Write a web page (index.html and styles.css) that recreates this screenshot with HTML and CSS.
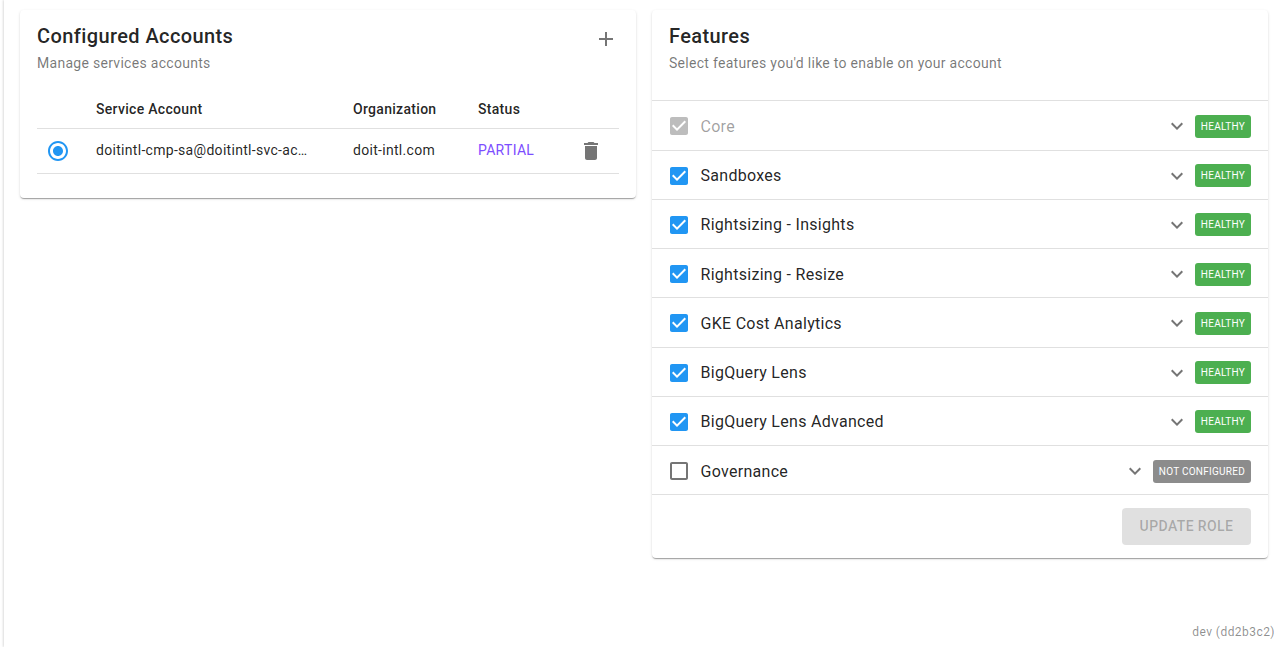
FILE: index.html
```html
<html>
	<head>
		<title>Accounts and Features</title>
		<link rel="stylesheet" href="styles.css">
	</head>

	<body>
		<div class="page">
			<div class="columns">
				<div class="card accounts">
					<div class="card-head">
						<div>
							<div class="title">Configured Accounts</div>
							<div class="subtitle">Manage services accounts</div>
						</div>
						<svg class="add" viewBox="0 0 24 24"><path d="M19 13h-6v6h-2v-6H5v-2h6V5h2v6h6v2z"/></svg>
					</div>
					<div class="table">
						<div class="table-row table-header">
							<span></span>
							<span>Service Account</span>
							<span>Organization</span>
							<span>Status</span>
							<span></span>
						</div>
						<div class="table-row">
							<svg class="radio" viewBox="0 0 24 24"><path d="M12 7c-2.76 0-5 2.24-5 5s2.24 5 5 5 5-2.24 5-5-2.24-5-5-5zm0-5C6.48 2 2 6.48 2 12s4.48 10 10 10 10-4.48 10-10S17.52 2 12 2zm0 18c-4.42 0-8-3.58-8-8s3.58-8 8-8 8 3.58 8 8-3.58 8-8 8z"/></svg>
							<span>doitintl-cmp-sa@doitintl-svc-ac…</span>
							<span>doit-intl.com</span>
							<span class="partial">PARTIAL</span>
							<svg class="trash" viewBox="0 0 24 24"><path d="M6 19c0 1.1.9 2 2 2h8c1.1 0 2-.9 2-2V7H6v12zM19 4h-3.5l-1-1h-5l-1 1H5v2h14V4z"/></svg>
						</div>
					</div>
				</div>

				<div class="card features">
					<div class="card-head features-head">
						<div>
							<div class="title">Features</div>
							<div class="subtitle">Select features you'd like to enable on your account</div>
						</div>
					</div>

					<div class="feature disabled">
						<svg class="check" viewBox="0 0 24 24"><path d="M19 3H5c-1.11 0-2 .9-2 2v14c0 1.1.89 2 2 2h14c1.11 0 2-.9 2-2V5c0-1.1-.89-2-2-2zm-9 14l-5-5 1.41-1.41L10 14.17l7.59-7.59L19 8l-9 9z"/></svg>
						<span class="name">Core</span>
						<svg class="chevron" viewBox="0 0 24 24"><path d="M16.59 8.59L12 13.17 7.41 8.59 6 10l6 6 6-6z"/></svg>
						<span class="badge">HEALTHY</span>
					</div>
					<div class="feature">
						<svg class="check" viewBox="0 0 24 24"><path d="M19 3H5c-1.11 0-2 .9-2 2v14c0 1.1.89 2 2 2h14c1.11 0 2-.9 2-2V5c0-1.1-.89-2-2-2zm-9 14l-5-5 1.41-1.41L10 14.17l7.59-7.59L19 8l-9 9z"/></svg>
						<span class="name">Sandboxes</span>
						<svg class="chevron" viewBox="0 0 24 24"><path d="M16.59 8.59L12 13.17 7.41 8.59 6 10l6 6 6-6z"/></svg>
						<span class="badge">HEALTHY</span>
					</div>
					<div class="feature">
						<svg class="check" viewBox="0 0 24 24"><path d="M19 3H5c-1.11 0-2 .9-2 2v14c0 1.1.89 2 2 2h14c1.11 0 2-.9 2-2V5c0-1.1-.89-2-2-2zm-9 14l-5-5 1.41-1.41L10 14.17l7.59-7.59L19 8l-9 9z"/></svg>
						<span class="name">Rightsizing - Insights</span>
						<svg class="chevron" viewBox="0 0 24 24"><path d="M16.59 8.59L12 13.17 7.41 8.59 6 10l6 6 6-6z"/></svg>
						<span class="badge">HEALTHY</span>
					</div>
					<div class="feature">
						<svg class="check" viewBox="0 0 24 24"><path d="M19 3H5c-1.11 0-2 .9-2 2v14c0 1.1.89 2 2 2h14c1.11 0 2-.9 2-2V5c0-1.1-.89-2-2-2zm-9 14l-5-5 1.41-1.41L10 14.17l7.59-7.59L19 8l-9 9z"/></svg>
						<span class="name">Rightsizing - Resize</span>
						<svg class="chevron" viewBox="0 0 24 24"><path d="M16.59 8.59L12 13.17 7.41 8.59 6 10l6 6 6-6z"/></svg>
						<span class="badge">HEALTHY</span>
					</div>
					<div class="feature">
						<svg class="check" viewBox="0 0 24 24"><path d="M19 3H5c-1.11 0-2 .9-2 2v14c0 1.1.89 2 2 2h14c1.11 0 2-.9 2-2V5c0-1.1-.89-2-2-2zm-9 14l-5-5 1.41-1.41L10 14.17l7.59-7.59L19 8l-9 9z"/></svg>
						<span class="name">GKE Cost Analytics</span>
						<svg class="chevron" viewBox="0 0 24 24"><path d="M16.59 8.59L12 13.17 7.41 8.59 6 10l6 6 6-6z"/></svg>
						<span class="badge">HEALTHY</span>
					</div>
					<div class="feature">
						<svg class="check" viewBox="0 0 24 24"><path d="M19 3H5c-1.11 0-2 .9-2 2v14c0 1.1.89 2 2 2h14c1.11 0 2-.9 2-2V5c0-1.1-.89-2-2-2zm-9 14l-5-5 1.41-1.41L10 14.17l7.59-7.59L19 8l-9 9z"/></svg>
						<span class="name">BigQuery Lens</span>
						<svg class="chevron" viewBox="0 0 24 24"><path d="M16.59 8.59L12 13.17 7.41 8.59 6 10l6 6 6-6z"/></svg>
						<span class="badge">HEALTHY</span>
					</div>
					<div class="feature">
						<svg class="check" viewBox="0 0 24 24"><path d="M19 3H5c-1.11 0-2 .9-2 2v14c0 1.1.89 2 2 2h14c1.11 0 2-.9 2-2V5c0-1.1-.89-2-2-2zm-9 14l-5-5 1.41-1.41L10 14.17l7.59-7.59L19 8l-9 9z"/></svg>
						<span class="name">BigQuery Lens Advanced</span>
						<svg class="chevron" viewBox="0 0 24 24"><path d="M16.59 8.59L12 13.17 7.41 8.59 6 10l6 6 6-6z"/></svg>
						<span class="badge">HEALTHY</span>
					</div>
					<div class="feature off">
						<svg class="check" viewBox="0 0 24 24"><path d="M19 5v14H5V5h14m0-2H5c-1.1 0-2 .9-2 2v14c0 1.1.9 2 2 2h14c1.1 0 2-.9 2-2V5c0-1.1-.9-2-2-2z"/></svg>
						<span class="name">Governance</span>
						<svg class="chevron" viewBox="0 0 24 24"><path d="M16.59 8.59L12 13.17 7.41 8.59 6 10l6 6 6-6z"/></svg>
						<span class="badge grey">NOT CONFIGURED</span>
					</div>

					<div class="card-actions">
						<div class="button">UPDATE ROLE</div>
					</div>
				</div>
			</div>

			<div class="version">dev (dd2b3c2)</div>
		</div>
	</body>
</html>
```

FILE: styles.css
```css
body{
	margin:0;
	background:#fff;
	font-family:Roboto, "Liberation Sans", sans-serif;
	color:rgba(0,0,0,0.87);
}

.page{
	height:647px;
	box-sizing:border-box;
	margin-left:4px;
	box-shadow:-1px 0 2px rgba(0,0,0,0.14);
	clip-path:inset(0 0 0 -4px);
	padding:10px 12px 7px 16px;
	display:flex;
	flex-direction:column;
	background:#fff;
}

.columns{
	display:flex;
	align-items:flex-start;
	gap:16px;
	flex:1;
}

.card{
	width:616px;
	background:#fff;
	border-radius:4px;
	box-shadow:0 2px 1px -1px rgba(0,0,0,0.2), 0 1px 1px 0 rgba(0,0,0,0.14), 0 1px 3px 0 rgba(0,0,0,0.12);
}

.accounts{
	padding:0 17px 25px;
	box-sizing:border-box;
	height:188px;
}

.card-head{
	display:flex;
	justify-content:space-between;
	padding-top:12px;
}

.features-head{
	padding:12px 17px 0;
	height:90.4px;
	box-sizing:border-box;
}

.title{
	font-size:20px;
	font-weight:500;
	line-height:28px;
	letter-spacing:0.4px;
}

.subtitle{
	font-size:14px;
	line-height:20px;
	margin-top:3px;
	letter-spacing:0.29px;
	color:rgba(0,0,0,0.54);
}

.add{
	width:24px;
	height:24px;
	margin:5px 1px 0 0;
	fill:#757575;
}

.table{
	margin-top:19px;
	font-size:14px;
	letter-spacing:0.3px;
}

.table-row{
	display:grid;
	grid-template-columns:59px 257px 125px 100px 24px;
	align-items:center;
	height:45px;
	box-sizing:border-box;
	padding-bottom:1px;
	border-bottom:1px solid #e0e0e0;
}

.table-row span{
	padding-bottom:1px;
}

.table-header{
	height:37px;
	font-weight:500;
}

.radio{
	width:24px;
	height:24px;
	margin-left:9px;
	fill:#2196f3;
}

.partial{
	color:#7c4dff;
}

.trash{
	width:24px;
	height:24px;
	margin-left:1px;
	fill:#757575;
}

.feature{
	display:flex;
	align-items:center;
	height:49.25px;
	box-sizing:border-box;
	padding:1.5px 17px 0 15px;
	border-top:1px solid #e0e0e0;
	font-size:16px;
	letter-spacing:0.29px;
}

.check{
	width:24px;
	height:24px;
	fill:#2196f3;
	flex:none;
}

.name{
	flex:1;
	margin-left:9.5px;
}

.chevron{
	width:24px;
	height:24px;
	margin-right:6px;
	fill:#757575;
}

.badge{
	background:#4caf50;
	color:#fff;
	font-size:10px;
	line-height:23px;
	height:23px;
	padding:0 6px;
	border-radius:3px;
	letter-spacing:0.26px;
}

.badge.grey{
	background:#8c8c8c;
}

.disabled .check{
	fill:#bdbdbd;
}

.disabled .name{
	color:rgba(0,0,0,0.38);
}

.off .check{
	fill:#757575;
}

.card-actions{
	display:flex;
	justify-content:flex-end;
	border-top:1px solid #e0e0e0;
	padding:13px 17px 13px 0;
}

.button{
	width:129px;
	height:37px;
	line-height:37px;
	text-align:center;
	background:#e0e0e0;
	color:rgba(0,0,0,0.26);
	border-radius:4px;
	font-size:14px;
	font-weight:500;
	letter-spacing:0.4px;
}

.version{
	text-align:right;
	font-size:12px;
	line-height:16px;
	margin-right:-7px;
	letter-spacing:0.45px;
	color:rgba(0,0,0,0.45);
}
```
